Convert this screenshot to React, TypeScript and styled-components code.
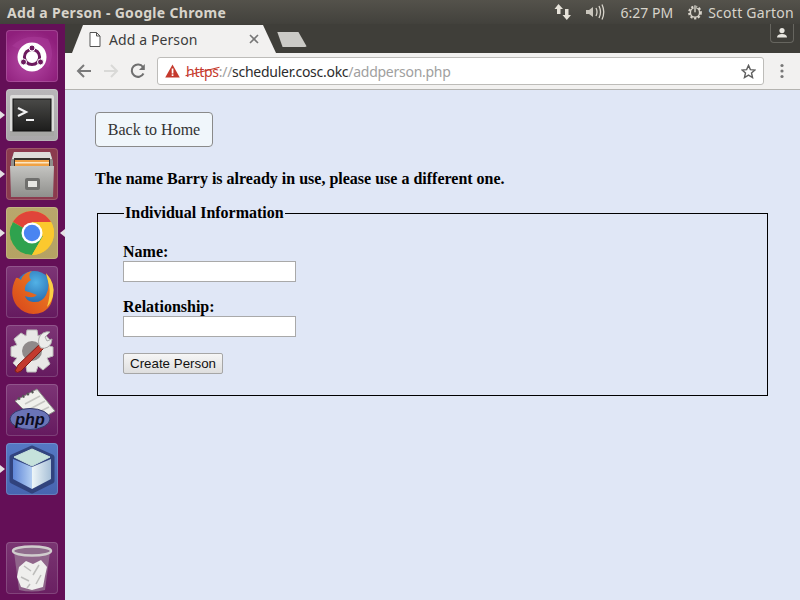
import React from "react";
import styled, { createGlobalStyle } from "styled-components";

const Global = createGlobalStyle`
  html, body { margin: 0; padding: 0; height: 100%; overflow: hidden; }
  #root { height: 600px; width: 800px; }
`;

const ui = `"Noto Sans", "Open Sans", sans-serif`;

const Screen = styled.div`
  width: 800px; height: 600px; display: grid;
  grid-template-rows: 24px 1fr; grid-template-columns: 65px 1fr;
  overflow: hidden;
`;
const TopBar = styled.header`
  grid-column: 1 / 3; display: flex; align-items: center; padding: 0 6px 0 7px;
  background: linear-gradient(#54524b, #42413c);
  color: #dfdbd2; font: 14px ${ui};
`;
const Title = styled.div`
  font-weight: 700; font-size: 14px; letter-spacing: 0.31px; flex: 1; color: #d8d4cb;
`;
const Tray = styled.div`
  display: flex; align-items: center;
`;
const Clock = styled.span`
  margin: 0 14px 0 16px; font-size: 14px; color: #d8d4cb;
`;
const UserName = styled.span`
  margin-left: 5px; font-size: 14px; letter-spacing: 0.27px; color: #d8d4cb;
`;
const Launcher = styled.nav`
  display: flex; flex-direction: column; gap: 7px; padding: 6px 0 6px 6px;
  background: #640f57; border-right: 1px solid #55104b; width: 59px;
`;
const Spacer = styled.div`flex: 1;`;
const Tile = styled.div<{ $bg: string; $pip?: boolean; $active?: boolean }>`
  position: relative; width: 52px; height: 52px; border-radius: 4px; flex: none;
  background: ${p => p.$bg};
  box-shadow: inset 0 0 0 1px rgba(255,255,255,.16);
  & > svg { display: block; }
  &::before {
    content: ""; display: ${p => (p.$pip ? "block" : "none")}; position: absolute;
    left: -6px; top: 22px; border: 4px solid transparent; border-left: 5px solid #e4e0e4; border-right: 0;
  }
  &::after {
    content: ""; display: ${p => (p.$active ? "block" : "none")}; position: absolute;
    right: -7px; top: 22px; border: 4px solid transparent; border-right: 5px solid #e4e0e4; border-left: 0;
  }
`;
const Browser = styled.main`
  display: flex; flex-direction: column; min-width: 0;
`;
const TabStrip = styled.div`
  height: 29px; flex: none; display: flex; background: #3f3e39; position: relative;
`;
const Tab = styled.div`
  margin-left: 7px; margin-top: 1px; width: 204px; height: 28px; padding: 0 17px 0 17px;
  box-sizing: border-box; display: flex; align-items: center; gap: 8px;
  background: #f2f1f0; color: #3c3c3c; font: 14px ${ui};
  clip-path: polygon(0 100%, 11px 0, 191px 0, 100% 100%);
`;
const TabTitle = styled.span`flex: 1; letter-spacing: 0.1px;`;
const NewTab = styled.div`
  width: 33px; height: 15px; margin: 8px 0 0 -2px; background: #cbcac6;
  clip-path: polygon(10% 0, 74% 0, 100% 100%, 26% 100%); border-radius: 2px;
`;
const Profile = styled.div`
  position: absolute; right: 6px; top: 0; width: 24px; height: 19px; box-sizing: border-box;
  border: 1px solid #66655f; border-top: 0; border-radius: 0 0 4px 4px;
  display: flex; align-items: center; justify-content: center;
`;
const Toolbar = styled.div`
  height: 36px; flex: none; display: flex; align-items: center; background: #f2f1f0;
  border-bottom: 1px solid #b4b3b0; padding: 0 12px 0 10px; box-sizing: content-box;
`;
const NavIcon = styled.svg<{ $gap: number }>`
  width: 18px; height: 18px; flex: none; margin-right: ${p => p.$gap}px; display: block;
`;
const Omnibox = styled.div`
  flex: 1; height: 28px; margin-right: 12px; box-sizing: border-box;
  display: flex; align-items: center; background: #fff; border: 1px solid #bdbcb9; border-radius: 3px;
  padding: 0 7px; font: 14px ${ui}; color: #a0a0a0; letter-spacing: -0.27px;
`;
const Url = styled.div`flex: 1; margin-left: 6px; white-space: nowrap;`;
const Scheme = styled.span`color: #c5392c; position: relative;
  &::after { content: ""; position: absolute; left: -1px; right: -1px; top: 9px; border-top: 1px solid #c5392c; transform: rotate(-14deg); }
`;
const Host = styled.span`color: #2c2c2c;`;
const Page = styled.div`
  flex: 1; background: #e0e7f6; padding: 22px 32px 0 30px;
  font: 16px "Liberation Serif", serif; color: #000;
`;
const HomeButton = styled.button`
  display: block; width: 118px; height: 35px; box-sizing: border-box; padding: 0;
  background: #f0f6fb; border: 1px solid #8a8a8a; border-radius: 4px;
  font: 16px "Liberation Serif", serif; color: #333;
`;
const Message = styled.p`
  margin: 23px 0 0; font-weight: 700; line-height: 18px;
`;
const Group = styled.fieldset`
  margin: 16px 0 0 2px; padding: 21px 25px 21px 25px; border: 1px solid #000; min-inline-size: 0;
  box-sizing: border-box; height: 192px;
`;
const Legend = styled.legend`
  margin-left: 1px; padding: 0 1px; font-weight: 700; line-height: 18px;
`;
const Field = styled.label`
  display: block; font-weight: 700; line-height: 18px; margin-bottom: 16px;
`;
const TextBox = styled.input`
  display: block; width: 173px; height: 21px; box-sizing: border-box; margin: 0;
  background: #fff; border: 1px solid #a9a9a9; padding: 1px 2px;
`;
const Submit = styled.button`
  display: block; width: 100px; height: 21px; box-sizing: border-box; padding: 0;
  background: linear-gradient(#f6f6f6, #dedede); border: 1px solid #a6a6a6; border-radius: 2px;
  font: 13.33px "Liberation Sans", sans-serif; color: #111;
`;

const Ico = ({ children }: { children: React.ReactNode }) => (
  <svg width="52" height="52" viewBox="0 0 52 52">{children}</svg>
);

export default function App() {
  return (
    <Screen>
      <Global />
      <TopBar>
        <Title>Add a Person - Google Chrome</Title>
        <Tray>
          <svg width="20" height="20" viewBox="0 0 20 20" style={{ marginRight: 12 }}>
            <path d="M5.5 3 L10 8 H7.5 V13 H4 V8 H1.5 Z" fill="#e6e2d9" transform="translate(0 -1)" />
            <path d="M12 7 H15.5 V13 H18 L13.8 18 L9.5 13 H12 Z" fill="#e6e2d9" />
          </svg>
          <svg width="20" height="18" viewBox="0 0 20 18">
            <path d="M1 7 H4 L8 4 V14 L4 11 H1 Z" fill="#c9c5bc" />
            <path d="M11 5 Q13 9 11 13 M14 3 Q17 9 14 15 M17 1.5 Q20.5 9 17 16.5" fill="none" stroke="#d8d4cb" strokeWidth="1.3" />
          </svg>
          <Clock>6:27 PM</Clock>
          <svg width="16" height="16" viewBox="0 0 16 16">
            <circle cx="8" cy="8.5" r="5.8" fill="none" stroke="#d8d4cb" strokeWidth="2.2" strokeDasharray="2.2 1.6" />
            <circle cx="8" cy="8.5" r="4.6" fill="none" stroke="#d8d4cb" strokeWidth="1.4" />
            <rect x="7" y="1" width="2" height="7.5" fill="#d8d4cb" stroke="#4c4b45" strokeWidth=".6" />
          </svg>
          <UserName>Scott Garton</UserName>
        </Tray>
      </TopBar>

      <Launcher>
        <Tile $bg="radial-gradient(circle at 45% 60%, #b64aa6, #8f1f7c 75%)">
          <Ico>
            <path d="M6 16 Q20 2 42 9 Q50 24 42 38 Q30 24 6 16 Z" fill="#a93b97" opacity=".6" />
            <circle cx="26" cy="27" r="14.5" fill="#fff" />
            <circle cx="26" cy="27" r="7.6" fill="none" stroke="#6d1a5e" strokeWidth="3" />
            <circle cx="26" cy="18" r="3" fill="#6d1a5e" stroke="#fff" />
            <circle cx="17.5" cy="32" r="3" fill="#6d1a5e" stroke="#fff" />
            <circle cx="34.5" cy="32" r="3" fill="#6d1a5e" stroke="#fff" />
          </Ico>
        </Tile>
        <Tile $bg="linear-gradient(#b9b7b9, #a9a7a9)" $pip>
          <Ico>
            <defs>
              <linearGradient id="termScreen" x1="0" y1="0" x2="0" y2="1">
                <stop offset="0" stopColor="#4a4a48" />
                <stop offset="1" stopColor="#1d1d1c" />
              </linearGradient>
            </defs>
            <rect x="4" y="6" width="44" height="41" rx="2" fill="#dcdcda" />
            <rect x="4" y="42" width="44" height="5" fill="#a6a6a4" />
            <rect x="7" y="10" width="38" height="32" fill="url(#termScreen)" stroke="#0e0e0e" />
            <path d="M12 19 L20 23 L12 27" fill="none" stroke="#f2f2f2" strokeWidth="2.2" />
            <rect x="20" y="30" width="8" height="2" fill="#f2f2f2" />
          </Ico>
        </Tile>
        <Tile $bg="#8b3a4e" $pip>
          <Ico>
            <defs>
              <linearGradient id="cabFront" x1="0" y1="0" x2="0" y2="1">
                <stop offset="0" stopColor="#c4c4c1" />
                <stop offset="1" stopColor="#8f8f8c" />
              </linearGradient>
            </defs>
            <path d="M8 4 H44 L47 13 V49 H5 V13 Z" fill="#8f8f8c" />
            <path d="M8 4 H44 L46 11 H6 Z" fill="#dededb" />
            <rect x="8" y="10" width="36" height="11" fill="#37332e" />
            <path d="M9 12 H43 V18 H9 Z" fill="#f0a245" />
            <path d="M9 14 H43 V15.5 H9 Z" fill="#fbe6c4" />
            <path d="M4 18 H48 L47 49 H5 Z" fill="url(#cabFront)" />
            <rect x="19" y="30" width="15" height="12" rx="2" fill="#6f6f6d" />
            <rect x="22" y="33" width="9" height="6" fill="#e6e6e3" />
          </Ico>
        </Tile>
        <Tile $bg="linear-gradient(#b9a76c, #b5a263)" $pip $active>
          <Ico>
            <circle cx="26" cy="26" r="22" fill="#fbc92e" />
            <path d="M26 26 L6.9 15 A22 22 0 0 1 45 15 L26 15 Z" fill="#e0453a" />
            <path d="M26 26 L6.9 15 A22 22 0 0 0 26 48 L37 29 Z" fill="#2fa24e" />
            <path d="M26 26 L45 15 A22 22 0 0 1 26 48 L37 29 Z" fill="#fbc92e" />
            <circle cx="26" cy="26" r="10.5" fill="#fff" />
            <circle cx="26" cy="26" r="8.2" fill="#4a85f1" />
          </Ico>
        </Tile>
        <Tile $bg="linear-gradient(#7d3576, #651a5f)">
          <Ico>
            <defs>
              <radialGradient id="foxGlobe" cx=".55" cy=".3" r=".8">
                <stop offset="0" stopColor="#52b2e6" />
                <stop offset="1" stopColor="#124a96" />
              </radialGradient>
              <linearGradient id="foxTail" x1="0" y1="1" x2="1" y2="0">
                <stop offset="0" stopColor="#d8431a" />
                <stop offset="1" stopColor="#f08a24" />
              </linearGradient>
            </defs>
            <circle cx="28" cy="24" r="19" fill="url(#foxGlobe)" />
            <path d="M10 12 Q2 28 11 40 Q22 52 37 46 Q48 40 47 24 Q46 14 40 8 Q45 20 40 29 Q36 37 27 36 Q20 35 19 30 Q27 33 31 29 Q24 26 19 25 Q18 18 25 14 Q21 9 26 5 Q17 7 15 14 Q11 11 10 12 Z" fill="url(#foxTail)" />
            <path d="M40 7 Q50 18 47 30 Q45 37 41 41 Q45 28 43 19 Z" fill="#fbcf45" />
          </Ico>
        </Tile>
        <Tile $bg="linear-gradient(#7d3576, #651a5f)">
          <Ico>
            <path d="M21 5 H31 L32 11 L38 8.5 L44 15 L40 20 L47 22 V31 L41 33 L44 39 L37 45 L32 41 L30 47 H21 L20 41 L14 45 L7 38 L11 33 L5 31 V22 L11 20 L8 14 L15 8 L20 11 Z" fill="#e8e8e6" stroke="#bcbcba" />
            <circle cx="26" cy="26" r="10" fill="#8f8a8a" />
            <path d="M9 46 L12 40 L35 18 L39 22 L15 46 Q11 49 9 46 Z" fill="#c33a2e" stroke="#7e1f18" />
            <path d="M33 20 Q31 12 37 8 Q41 6 44 7 L39 12 L41 16 L46 14 Q46 19 42 22 Q38 24 35 23 Z" fill="#ececea" stroke="#aaa" />
          </Ico>
        </Tile>
        <Tile $bg="linear-gradient(#7d3576, #651a5f)">
          <Ico>
            <path d="M9 17 L31 5 L49 27 L30 38 Z" fill="#f0f0ec" stroke="#8a8a86" />
            <path d="M12 15 L30 6" stroke="#555" strokeWidth="3" strokeDasharray="2 3" />
            <path d="M19 20 L34 12 M24 25 L39 17 M29 30 L43 23" stroke="#c6c6c2" strokeWidth="1.5" />
            <ellipse cx="24" cy="35" rx="20" ry="10.5" fill="#6a74b6" stroke="#33386a" />
            <text x="24" y="41" textAnchor="middle" fontFamily="Liberation Sans, sans-serif" fontStyle="italic" fontWeight="700" fontSize="16" fill="#0c0c20">php</text>
          </Ico>
        </Tile>
        <Tile $bg="linear-gradient(#5578c4, #4765b0)" $pip>
          <Ico>
            <defs>
              <linearGradient id="cubeL" x1="0" y1="0" x2="1" y2="0">
                <stop offset="0" stopColor="#5f86d8" />
                <stop offset="1" stopColor="#b4cff2" />
              </linearGradient>
              <linearGradient id="cubeR" x1="0" y1="0" x2="1" y2="0">
                <stop offset="0" stopColor="#eef6f8" />
                <stop offset="1" stopColor="#a8c0d8" />
              </linearGradient>
            </defs>
            <path d="M26 5 L46 14 V38 L26 48 L6 38 V14 Z" fill="#2f3f78" stroke="#2f3f78" strokeWidth="5" strokeLinejoin="round" opacity=".9" />
            <path d="M26 6 L44 14 L26 23 L8 14 Z" fill="#c6e2dc" stroke="#c6e2dc" strokeLinejoin="round" />
            <path d="M7 16 L26 24 V46 L7 36 Z" fill="url(#cubeL)" />
            <path d="M45 16 L26 24 V46 L45 36 Z" fill="url(#cubeR)" />
          </Ico>
        </Tile>
        <Spacer />
        <Tile $bg="linear-gradient(#7a3572, #6a2062)">
          <Ico>
            <path d="M8 10 L13 48 Q26 51 39 48 L44 10 Z" fill="#9a7a96" opacity=".75" />
            <ellipse cx="26" cy="9" rx="19" ry="4.5" fill="#8f6c8c" stroke="#d0cdcd" strokeWidth="2.5" />
            <path d="M13 25 L20 19 L27 22 L35 18 L41 25 L39 34 L37 45 L26 48 L15 45 L11 35 Z" fill="#efefed" />
            <path d="M18 24 L25 29 M33 23 L27 33 M15 35 L23 39 M35 33 L30 42 M24 42 L21 46" stroke="#bdbdbb" strokeWidth="1.5" />
          </Ico>
        </Tile>
      </Launcher>

      <Browser>
        <TabStrip>
          <Tab>
            <svg width="12" height="15" viewBox="0 0 12 15" style={{ flex: "none" }}>
              <path d="M1 .5 H7.5 L11 4 V14.5 H1 Z M7.5 .5 V4 H11" fill="#fff" stroke="#555" />
            </svg>
            <TabTitle>Add a Person</TabTitle>
            <svg width="10" height="10" viewBox="0 0 10 10" style={{ flex: "none" }}>
              <path d="M1 1 L9 9 M9 1 L1 9" stroke="#777" strokeWidth="1.6" />
            </svg>
          </Tab>
          <NewTab />
          <Profile>
            <svg width="14" height="12" viewBox="0 0 14 12">
              <circle cx="7" cy="3.6" r="2.6" fill="#e8e6e0" />
              <path d="M2 10.5 Q2 7 7 7 Q12 7 12 10.5 Z" fill="#e8e6e0" />
            </svg>
          </Profile>
        </TabStrip>
        <Toolbar>
          <NavIcon $gap={9} viewBox="0 0 18 18">
            <path d="M16 9 H3 M9 3 L3 9 L9 15" fill="none" stroke="#7a7a7a" strokeWidth="2" />
          </NavIcon>
          <NavIcon $gap={9} viewBox="0 0 18 18">
            <path d="M2 9 H15 M9 3 L15 9 L9 15" fill="none" stroke="#d9d9d7" strokeWidth="2" />
          </NavIcon>
          <NavIcon $gap={10} viewBox="0 0 18 18">
            <path d="M14.5 11.5 A6.2 6.2 0 1 1 14 5" fill="none" stroke="#6f6f6f" strokeWidth="2" />
            <path d="M15.8 2 V8 H10 Z" fill="#6f6f6f" />
          </NavIcon>
          <Omnibox>
            <svg width="15" height="14" viewBox="0 0 15 14" style={{ flex: "none" }}>
              <path d="M7.5 .5 L14.8 13.5 H.2 Z" fill="#c5392c" />
              <rect x="6.7" y="4.5" width="1.7" height="5" fill="#fff" />
              <rect x="6.7" y="10.3" width="1.7" height="1.7" fill="#fff" />
            </svg>
            <Url>
              <Scheme>https</Scheme>://<Host>scheduler.cosc.okc</Host>/addperson.php
            </Url>
            <svg width="15" height="15" viewBox="0 0 16 16" style={{ flex: "none" }}>
              <path d="M8 1.5 L10 6 L14.8 6.4 L11.2 9.6 L12.3 14.4 L8 11.8 L3.7 14.4 L4.8 9.6 L1.2 6.4 L6 6 Z" fill="none" stroke="#5f5f5f" strokeWidth="1.5" />
            </svg>
          </Omnibox>
          <svg width="12" height="16" viewBox="0 0 12 16" style={{ flex: "none" }}>
            <circle cx="6" cy="2.5" r="1.6" fill="#777" />
            <circle cx="6" cy="8" r="1.6" fill="#777" />
            <circle cx="6" cy="13.5" r="1.6" fill="#777" />
          </svg>
        </Toolbar>
        <Page>
          <HomeButton>Back to Home</HomeButton>
          <Message>The name Barry is already in use, please use a different one.</Message>
          <Group>
            <Legend>Individual Information</Legend>
            <Field>Name:<TextBox type="text" /></Field>
            <Field>Relationship:<TextBox type="text" /></Field>
            <Submit>Create Person</Submit>
          </Group>
        </Page>
      </Browser>
    </Screen>
  );
}
